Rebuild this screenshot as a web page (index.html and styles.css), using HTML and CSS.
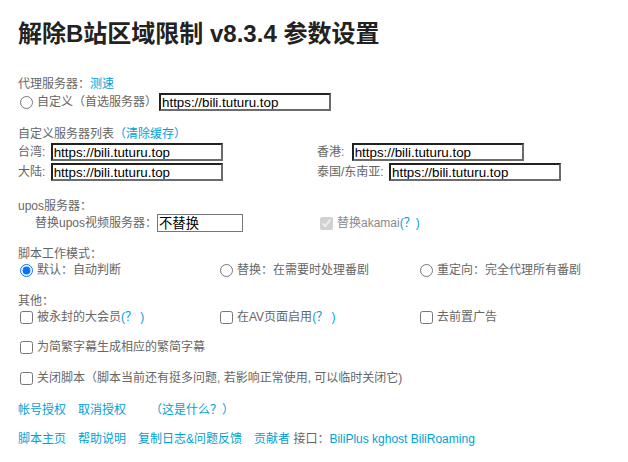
FILE: index.html
```html
<!DOCTYPE html>
<html lang="zh-CN">
<head>
<meta charset="utf-8">
<title>解除B站区域限制 参数设置</title>
<link rel="stylesheet" href="styles.css">
</head>
<body>
<div class="page">
  <h1 class="title">解除B站区域限制 v8.3.4 参数设置</h1>

  <div class="sec sec-proxy">
    <div class="line">代理服务器：<a class="link">测速</a></div>
    <div class="row">
      <label class="opt"><input type="radio" name="proxy" class="ctl">自定义（首选服务器）</label>
      <input class="url url-main" type="text" value="https://bili.tuturu.top">
    </div>
  </div>

  <div class="sec sec-list">
    <div class="line">自定义服务器列表<a class="link">（清除缓存）</a></div>
    <div class="grid2">
      <div class="row">台湾: <input class="url" type="text" value="https://bili.tuturu.top"></div>
      <div class="row">香港: <input class="url url-hk" type="text" value="https://bili.tuturu.top"></div>
      <div class="row">大陆: <input class="url" type="text" value="https://bili.tuturu.top"></div>
      <div class="row">泰国/东南亚: <input class="url" type="text" value="https://bili.tuturu.top"></div>
    </div>
  </div>

  <div class="sec sec-upos">
    <div class="line">upos服务器：</div>
    <div class="grid2">
      <div class="row indent">替换upos视频服务器：<select class="sel"><option>不替换</option></select></div>
      <div class="row"><label class="opt dis"><input type="checkbox" class="ctl ctl-ak" checked disabled>替换akamai<a class="link">(？)</a></label></div>
    </div>
  </div>

  <div class="sec sec-mode">
    <div class="line">脚本工作模式：</div>
    <div class="grid3">
      <label class="opt"><input type="radio" name="mode" class="ctl" checked>默认：自动判断</label>
      <label class="opt"><input type="radio" name="mode" class="ctl">替换：在需要时处理番剧</label>
      <label class="opt"><input type="radio" name="mode" class="ctl">重定向：完全代理所有番剧</label>
    </div>
  </div>

  <div class="sec sec-other">
    <div class="line">其他：</div>
    <div class="grid3">
      <label class="opt"><input type="checkbox" class="ctl">被永封的大会员<a class="link">(？ )</a></label>
      <label class="opt"><input type="checkbox" class="ctl">在AV页面启用<a class="link">(？ )</a></label>
      <label class="opt"><input type="checkbox" class="ctl">去前置广告</label>
    </div>
  </div>

  <div class="sec sec-sub">
    <label class="opt"><input type="checkbox" class="ctl">为简繁字幕生成相应的繁简字幕</label>
  </div>

  <div class="sec sec-close">
    <label class="opt"><input type="checkbox" class="ctl">关闭脚本（脚本当前还有挺多问题, 若影响正常使用, 可以临时关闭它)</label>
  </div>

  <div class="sec sec-auth links">
    <a class="link">帐号授权</a><a class="link">取消授权</a><a class="link what">（这是什么？）</a>
  </div>

  <div class="sec sec-foot links">
    <a class="link">脚本主页</a><a class="link">帮助说明</a><a class="link">复制日志&amp;问题反馈</a><a class="link last">贡献者</a> 接口：<a class="link plain">BiliPlus kghost BiliRoaming</a>
  </div>
</div>
</body>
</html>
```

FILE: styles.css
```css
html, body {
  margin: 0;
  padding: 0;
  background: #fff;
}

.page {
  padding: 0 10px 0 18px;
  font-family: "Liberation Sans", "Noto Sans CJK SC", sans-serif;
  font-size: 12px;
  color: #666;
  width: 600px;
}

.title {
  margin: 19px 0 0;
  font-size: 24px;
  line-height: 30px;
  font-weight: bold;
  color: #222;
  font-family: "Liberation Sans", "Noto Sans CJK SC", sans-serif;
}

.sec {
  line-height: 16px;
}

.line {
  height: 16px;
  line-height: 16px;
  white-space: nowrap;
}

.link {
  color: #00a1d6;
  text-decoration: none;
  cursor: pointer;
}

.row {
  display: flex;
  align-items: center;
  height: 20px;
  white-space: pre;
}

.opt {
  display: flex;
  align-items: center;
  white-space: nowrap;
  height: 16px;
}

.ctl {
  margin: 0 4px 0 2px;
  width: 13px;
  height: 13px;
  flex: none;
}

.url {
  box-sizing: border-box;
  width: 172px;
  height: 18px;
  margin: 0 0 0 2px;
  padding: 0 1px;
  border-style: solid;
  border-width: 2px;
  border-color: #222 #6b6b6b #6b6b6b #222;
  font-family: "Liberation Sans", Arial, sans-serif;
  font-size: 13.33px;
  color: #000;
  background: #fff;
  outline: none;
}

.url-main {
  margin-left: 2px;
}

.url-hk {
  margin-left: 4px;
}

.sec-proxy {
  margin-top: 27px;
}

.sec-list {
  margin-top: 14px;
}

.grid2 {
  display: grid;
  grid-template-columns: 299px 1fr;
}

.sec-upos {
  margin-top: 16px;
}

.sec-upos .row {
  height: 18px;
}

.indent {
  padding-left: 17px;
}

.sel {
  box-sizing: border-box;
  appearance: none;
  -webkit-appearance: none;
  width: 86px;
  height: 18px;
  margin: 0;
  padding: 0 1px;
  border: 1px solid #767676;
  border-radius: 0;
  background: #fff;
  color: #000;
  font-family: "Noto Sans CJK SC", sans-serif;
  font-size: 13.33px;
  line-height: 16px;
}

.dis {
  color: #8a8a8a;
}

.ctl-ak {
  margin-left: 3px;
}

.sec-mode {
  margin-top: 14px;
}

.grid3 {
  display: grid;
  grid-template-columns: 200px 200px 200px;
}

.grid3 .opt {
  height: 16px;
}

.sec-other {
  margin-top: 15px;
}

.sec-sub {
  margin-top: 14px;
}

.sec-close {
  margin-top: 15px;
}

.links {
  display: flex;
  align-items: center;
  white-space: pre;
  height: 16px;
}

.links .link {
  margin-right: 12px;
}

.links .what {
  margin-left: 12px;
}

.links .last {
  margin-right: 0;
}

.links .plain {
  margin-right: 0;
  margin-left: 0;
}

.sec-auth {
  margin-top: 16px;
}

.sec-foot {
  margin-top: 13px;
}
```
